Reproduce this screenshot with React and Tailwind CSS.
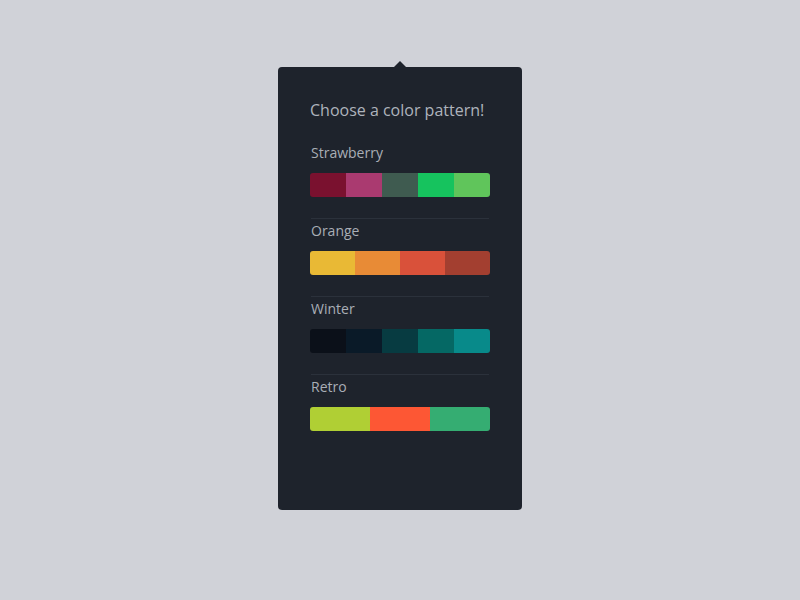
import React from "react";

const patterns = [
  { name: "Strawberry", colors: ["#7a112f", "#aa3a70", "#3f5b50", "#16c35e", "#60c55b"] },
  { name: "Orange", colors: ["#e9b935", "#e88b36", "#d9513a", "#a33f30"] },
  { name: "Winter", colors: ["#0b1019", "#0a1a28", "#073b41", "#056864", "#088a8a"] },
  { name: "Retro", colors: ["#b0cf34", "#fd5734", "#35ad72"] },
];

export default function App() {
  return (
    <div
      className="w-full h-[600px] bg-[#d0d2d8] flex justify-center"
      style={{ fontFamily: '"Open Sans", "Noto Sans", sans-serif' }}
    >
      <div className="relative mt-[67px] w-[244px] h-[443px] bg-[#1e232c] rounded-[4px] pl-[32px] pr-[32px] pt-[32px]">
        <div className="absolute left-[116px] -top-[6px] w-0 h-0 border-l-[6px] border-r-[6px] border-b-[6px] border-l-transparent border-r-transparent border-b-[#1e232c]" />
        <h1 className="text-[16px] leading-[22px] text-[#aeb3bc]">
          Choose a color pattern!
        </h1>
        <div className="flex flex-col">
          {patterns.map((p, i) => (
            <div key={p.name} className="flex flex-col">
              {i > 0 && <div className="mt-[21px] h-px bg-[#2b313b] mx-[1px]" />}
              <div className={(i === 0 ? "mt-[22px]" : "mt-[2px]") + " text-[14px] leading-[20px] text-[#a9aeb6] pl-[1px]"}>
                {p.name}
              </div>
              <div className="mt-[10px] h-[24px] flex rounded-[3px] overflow-hidden">
                {p.colors.map((c) => (
                  <div key={c} className="flex-1 h-full" style={{ backgroundColor: c }} />
                ))}
              </div>
            </div>
          ))}
        </div>
      </div>
    </div>
  );
}
